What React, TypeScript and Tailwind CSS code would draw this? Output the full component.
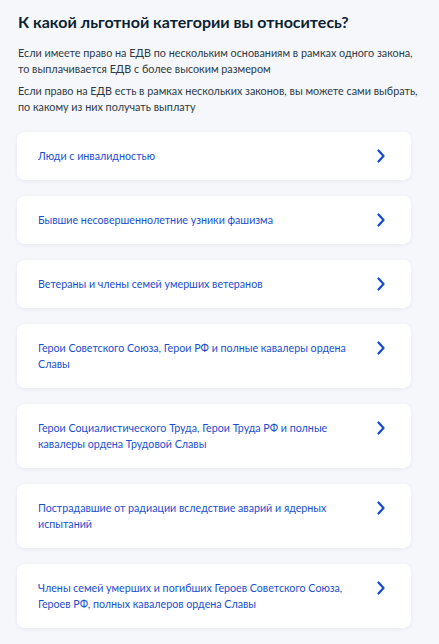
import React from 'react'

const items = [
    'Люди с инвалидностью',
    'Бывшие несовершеннолетние узники фашизма',
    'Ветераны и члены семей умерших ветеранов',
    'Герои Советского Союза, Герои РФ и полные кавалеры ордена Славы',
    'Герои Социалистического Труда, Герои Труда РФ и полные кавалеры ордена Трудовой Славы',
    'Пострадавшие от радиации вследствие аварий и ядерных испытаний',
    'Члены семей умерших и погибших Героев Советского Союза, Героев РФ, полных кавалеров ордена Славы',
]

function Chevron() {
    return (
        <svg width="10" height="14" viewBox="0 0 10 14" fill="none" className="shrink-0">
            <path d="M2.5 1.5L7.5 7L2.5 12.5" stroke="#0d4cd3" strokeWidth="2.2" strokeLinecap="round" strokeLinejoin="round" />
        </svg>
    )
}

export default function App() {
    return (
        <div className="min-h-screen bg-[#f5f7fa] px-[17px] pt-3 pb-4 font-['Lato','Noto_Sans',sans-serif] text-[#0b1f33]">
            <h1 className="pl-px text-[16px] leading-5 font-bold">К какой льготной категории вы относитесь?</h1>

            <div className="mt-[13px] pl-px text-[10.8px] leading-4 text-[#2c3a48]">
                <p>Если имеете право на ЕДВ по нескольким основаниям в рамках одного закона, то выплачивается ЕДВ с более высоким размером</p>
                <p className="mt-[6px]">Если право на ЕДВ есть в рамках нескольких законов, вы можете сами выбрать, по какому из них получать выплату</p>
            </div>

            <div className="mt-[17px] flex w-[394px] flex-col gap-4">
                {items.map((t) => (
                    <div key={t} className="flex items-start justify-between rounded-lg bg-white py-4 pl-[21px] pr-[25px] shadow-[0_1px_4px_rgba(60,90,140,0.08)] cursor-pointer">
                        <span className="max-w-[310px] text-[10.7px] leading-4 text-[#1a4fd0]">{t}</span>
                        <span className="flex h-4 items-center"><Chevron /></span>
                    </div>
                ))}
            </div>
        </div>
    )
}
